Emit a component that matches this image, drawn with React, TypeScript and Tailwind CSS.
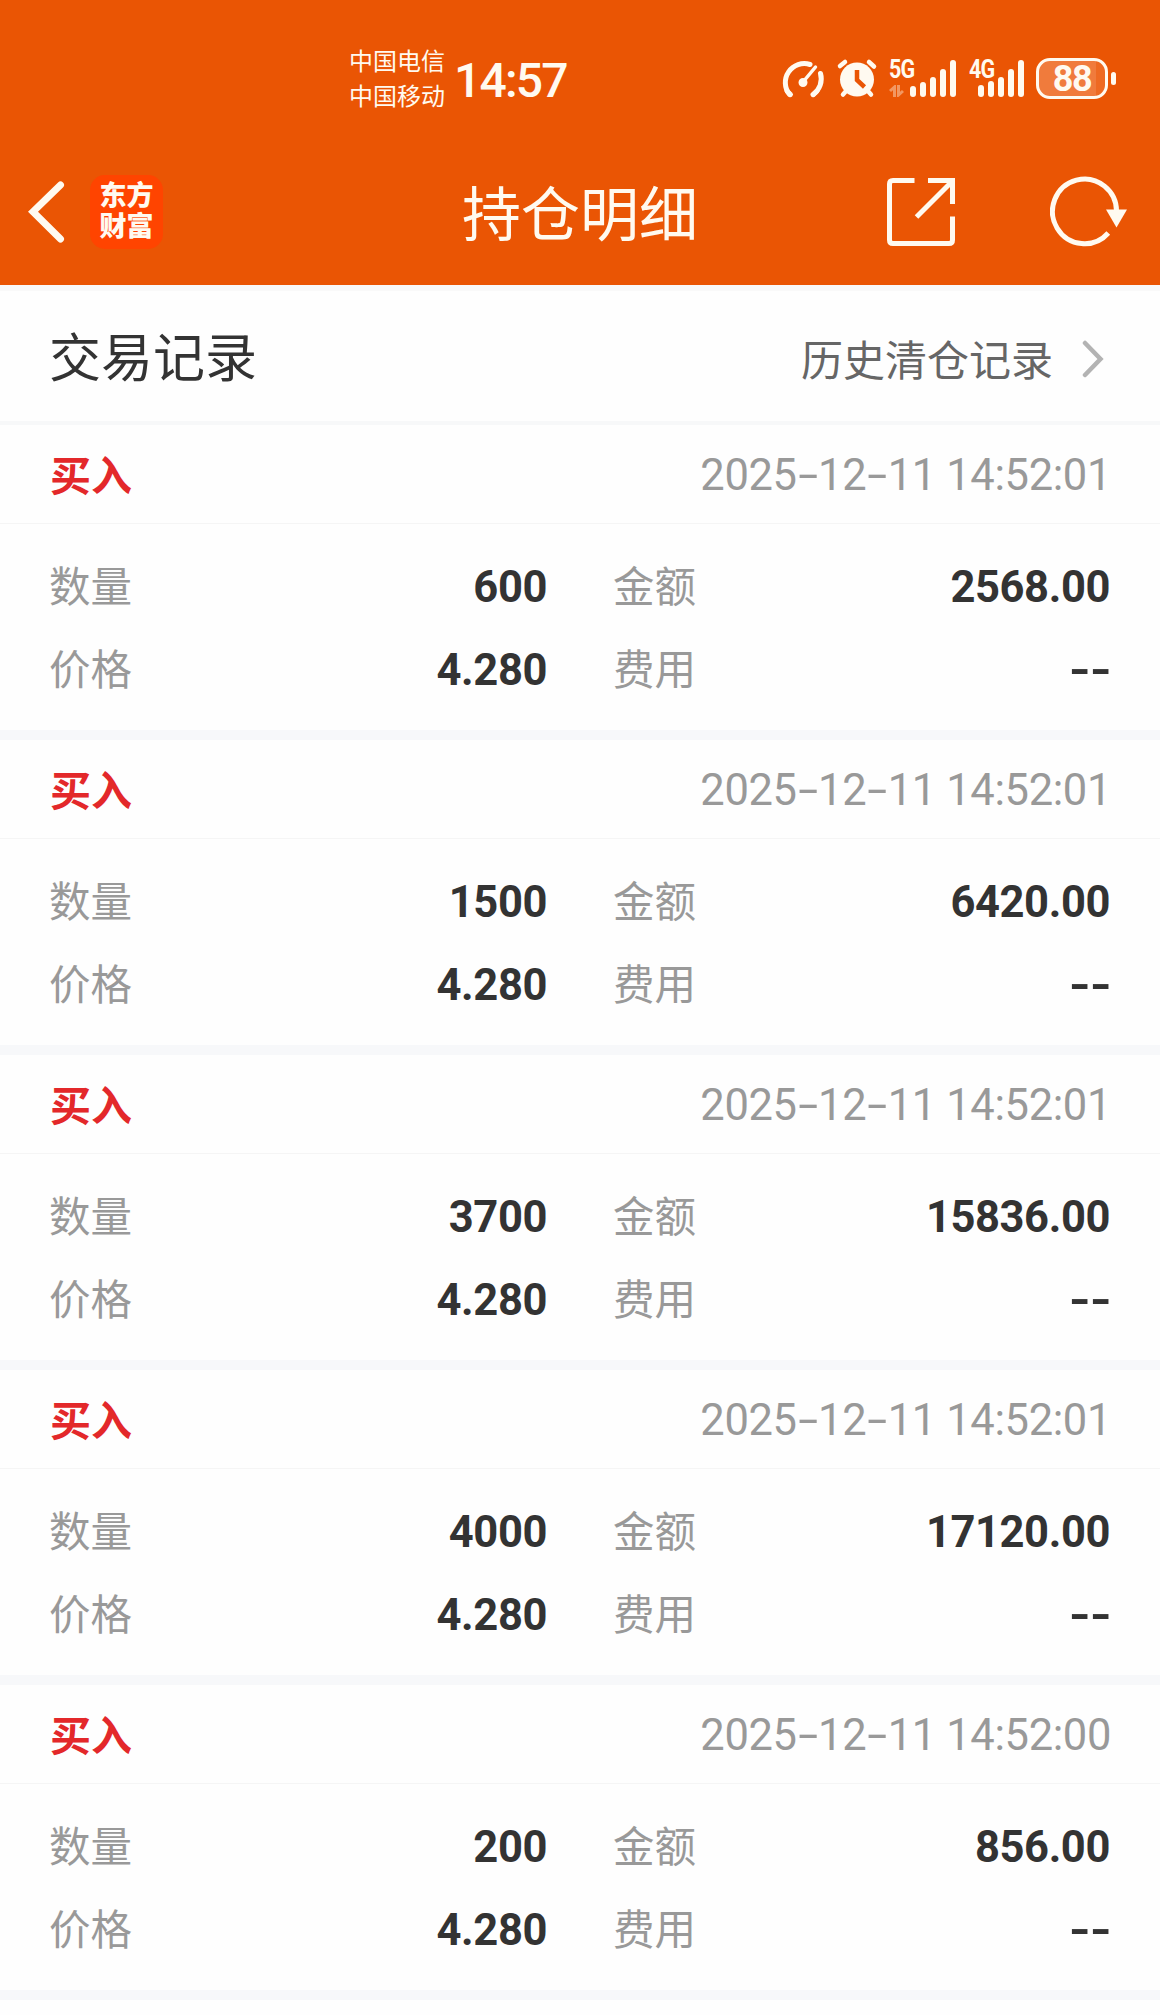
import React from "react";

const records = [
  { time: "2025-12-11 14:52:01", qty: "600", amount: "2568.00" },
  { time: "2025-12-11 14:52:01", qty: "1500", amount: "6420.00" },
  { time: "2025-12-11 14:52:01", qty: "3700", amount: "15836.00" },
  { time: "2025-12-11 14:52:01", qty: "4000", amount: "17120.00" },
  { time: "2025-12-11 14:52:00", qty: "200", amount: "856.00" },
];

function Timestamp({ value }: { value: string }) {
  return (
    <span className="pt-[4px] text-[43.5px] leading-[50px] tracking-[-0.38px] whitespace-pre text-[#999]">
      {value.split("-").map((part, i) => (
        <React.Fragment key={i}>
          {i > 0 && (
            <span className="inline-block w-[21.5px] text-center">
              <span className="inline-block scale-x-[1.65]">-</span>
            </span>
          )}
          {part}
        </React.Fragment>
      ))}
    </span>
  );
}

function Field({ label, value }: { label: string; value: string }) {
  return (
    <div className="flex h-[83px] items-center justify-between">
      <span className="pt-[3px] text-[41.5px] leading-[60px] text-[#999]">{label}</span>
      {value === "--" ? (
        <span className="flex gap-[5px] pr-[2px] text-[44px] leading-[60px] font-bold">
          <span className="inline-block w-[16px] scale-x-[1.28] text-center">-</span>
          <span className="inline-block w-[16px] scale-x-[1.28] text-center">-</span>
        </span>
      ) : (
        <span className="pt-[3px] text-[43.5px] leading-[60px] font-bold tracking-[-0.4px]">{value}</span>
      )}
    </div>
  );
}

function Bars({ heights }: { heights: string[] }) {
  return (
    <div className="flex items-end gap-1">
      {heights.map((h) => (
        <span key={h} className={"w-1.5 rounded-full bg-[#fffaf0] " + h} />
      ))}
    </div>
  );
}

function StatusBar() {
  return (
    <div className="flex h-[140px] items-start text-[#fffaf0]">
      <div className="mt-[45px] ml-[349px] w-[100px] text-[24px] leading-[35px]">
        <div>中国电信</div>
        <div>中国移动</div>
      </div>
      <div className="mt-[51px] ml-[5px] w-[120px] text-[48px] leading-[60px] font-medium tracking-[-1.8px]">14:57</div>
      <svg className="mt-[58px] ml-[206px] h-[42px] w-[48px]" viewBox="781 58 48 42" fill="none" stroke="#fffaf0" strokeWidth="5" strokeLinecap="round">
        <path d="M790.5 94.5 A19 19 0 0 1 811 64.5" />
        <path d="M821.5 73.5 A19 19 0 0 1 814 94.5" />
        <path d="M788 91 L791.5 94.5 M818 91 L814.5 94.5" />
        <path d="M804 82 L816.5 67" strokeWidth="3.5" />
        <circle cx="804" cy="82.5" r="3" fill="#fffaf0" strokeWidth="3" />
      </svg>
      <svg className="mt-[58px] ml-[8px] h-[42px] w-[44px]" viewBox="836 58 44 42" fill="none" stroke="#fffaf0" strokeWidth="4.5" strokeLinecap="round">
        <circle cx="857" cy="79.5" r="17" fill="#fffaf0" stroke="none" />
        <path d="M840 66 L845 62 M869 62 L874 66.5 M847 90 L843 94.5 M867 90 L871 94.5" />
        <path d="M857 70 V80 L864.5 87" stroke="#ea5504" strokeWidth="4.5" strokeLinecap="butt" />
      </svg>
      <div className="mt-[57px] ml-[9px] flex h-10 w-[68px] items-end">
        <div className="flex h-10 w-[21px] flex-col justify-between">
          <span className="w-7 origin-left scale-x-[0.86] text-[25px] leading-[26px] font-bold tracking-[-1px]">5G</span>
          <svg className="h-[12px] w-[15px] opacity-40" viewBox="0 0 15 12" fill="none" stroke="#fffaf0" strokeWidth="3">
            <path d="M5.5 12 V2 L1 6 M9.5 0 V10 L14 6" />
          </svg>
        </div>
        <Bars heights={["h-[11px]", "h-[15px]", "h-[20px]", "h-[28px]", "h-[37px]"]} />
      </div>
      <div className="mt-[57px] ml-[12px] flex h-10 w-[55px] items-end">
        <div className="flex h-10 w-[9px] flex-col">
          <span className="w-7 origin-left scale-x-[0.86] text-[25px] leading-[26px] font-bold tracking-[-1px]">4G</span>
        </div>
        <Bars heights={["h-[12px]", "h-[16px]", "h-[20px]", "h-[28px]", "h-[37px]"]} />
      </div>
      <div className="mt-[58px] ml-[12px] flex h-[41px] w-[72px] items-center justify-center overflow-hidden rounded-[14px] border-[3px] border-[#fffaf0] bg-linear-to-r from-[#f07b3c] from-87% to-[#ee6a22] to-87% pt-[1px] text-[36px] leading-[36px] font-bold tracking-[-1.5px]">88</div>
      <div className="mt-[72px] ml-[3px] h-[13px] w-[5px] rounded-full bg-[#fffaf0]" />
    </div>
  );
}

function TitleBar() {
  return (
    <div className="grid h-[145px] grid-cols-3 text-[#fffaf0]">
      <div className="flex items-start">
        <svg className="mt-[38px] ml-[26px] h-[66px] w-[42px]" viewBox="26.500 178 42 66" fill="none" stroke="#fffaf0" strokeWidth="7">
          <path d="M61 185 L33.5 211.8 L61 239" strokeLinecap="round" strokeLinejoin="miter" />
        </svg>
        <div className="mt-[35px] ml-[22px] flex h-[74px] w-[73px] flex-col items-center justify-center rounded-[15px] bg-[#ff4400] text-[27px] leading-[31px] font-black">
          <span>东方</span>
          <span>财富</span>
        </div>
      </div>
      <h1 className="mt-[31px] text-center text-[59px] leading-[90px] font-normal whitespace-nowrap">持仓明细</h1>
      <div className="flex justify-end">
        <svg className="mt-[35px] mr-[92px] h-[76px] w-[74px]" viewBox="884 175 74 76" fill="none" stroke="#fffaf0" strokeWidth="5">
          <path d="M914.5 180.5 H893 Q889.5 180.5 889.5 184 V240 Q889.5 243.5 893 243.5 H949 Q952.5 243.5 952.5 240 V216.5" />
          <path d="M928 180.5 H952.5 V204 M916.5 217 L951.5 182" />
        </svg>
        <svg className="mt-[35px] mr-[30px] h-[76px] w-[80px]" viewBox="1050 174.500 80 76" fill="none" stroke="#fffaf0" strokeWidth="5">
          <path d="M1116.5 212 A32 32.3 0 1 0 1108.3 232.5" />
          <path d="M1106 209 H1127 L1116.5 227 Z" fill="#fffaf0" stroke="none" />
        </svg>
      </div>
    </div>
  );
}

export default function App() {
  return (
    <div className="h-[2015px] w-[1160px] overflow-hidden bg-[#fefefe] font-[Roboto,'Noto_Sans_CJK_SC',sans-serif] text-[#333]">
      <header className="bg-[#ea5504]">
        <StatusBar />
        <TitleBar />
      </header>
      <div className="flex h-[140px] items-center justify-between border-t-6 border-b-4 border-t-[#f9f9f9] border-b-[#f7f8f9] pr-[55px] pl-[49px]">
        <h2 className="pt-[7px] text-[52px] leading-[80px] font-normal">交易记录</h2>
        <div className="flex items-center pt-[8px] text-[42px] leading-[60px] text-[#666]">
          <span className="pt-[3px]">历史清仓记录</span>
          <svg className="ml-[28px] h-[40px] w-[24px]" viewBox="0 0 24 40" fill="none" stroke="#b3b3b3" strokeWidth="4.5" strokeLinecap="round">
            <path d="M4 3 L19.5 19 L4 35" />
          </svg>
        </div>
      </div>
      {records.map((r, i) => (
        <section key={i} className="h-[315px] border-b-10 border-[#f7f8fa]">
          <div className="flex h-[99px] items-center justify-between border-b border-[#f5f5f5] pr-[49px] pl-[50px]">
            <span className="pt-[5px] text-[41px] leading-[60px] font-bold text-[#e3282a]">买入</span>
            <Timestamp value={r.time} />
          </div>
          <div className="grid grid-cols-[498px_497px] gap-x-[66px] pt-[21px] pl-[49px]">
            <Field label="数量" value={r.qty} />
            <Field label="金额" value={r.amount} />
            <Field label="价格" value="4.280" />
            <Field label="费用" value="--" />
          </div>
        </section>
      ))}
    </div>
  );
}
